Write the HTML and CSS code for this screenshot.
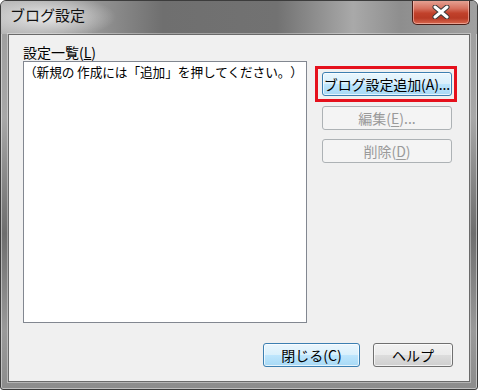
FILE: index.html
```html
<!DOCTYPE html>
<html lang="ja">
<head>
    <meta charset="UTF-8">
    <title>ブログ設定</title>
    <link rel="stylesheet" href="styles.css">
</head>
<body>
    <div class="window">
        <div class="titlebar">
            <span class="title">ブログ設定</span>
            <div class="close-x">
                <svg width="20" height="14" viewBox="0 0 20 14">
                    <path d="M4 2 L16 12 M16 2 L4 12" stroke="#3a3a3a" stroke-width="5" stroke-linecap="round"/>
                    <path d="M4 2 L16 12 M16 2 L4 12" stroke="#ffffff" stroke-width="3" stroke-linecap="round"/>
                </svg>
            </div>
        </div>

        <div class="client">
            <div class="main">
                <div class="list-col">
                    <div class="label">設定一覧(<u>L</u>)</div>
                    <div class="listbox">（新規の 作成には「追加」を押してください。）</div>
                </div>
                <div class="side">
                    <div class="highlight">
                        <button class="btn btn-default btn-add">ブログ設定追加(A)...</button>
                    </div>
                    <button class="btn btn-side btn-edit" disabled>編集(<u>E</u>)...</button>
                    <button class="btn btn-side btn-del" disabled>削除(<u>D</u>)</button>
                </div>
            </div>
            <div class="footer">
                <button class="btn btn-default btn-close">閉じる(C)</button>
                <button class="btn btn-help">ヘルプ</button>
            </div>
        </div>
    </div>
</body>
</html>
```

FILE: styles.css
```css
* {
    box-sizing: border-box;
    margin: 0;
    padding: 0;
}

body {
    width: 478px;
    height: 390px;
    overflow: hidden;
    font-family: "Noto Sans CJK JP", "Noto Sans", sans-serif;
    font-size: 14px;
    color: #000;
    background: #fff;
    text-spacing-trim: space-all;
}

.window {
    width: 478px;
    height: 390px;
    border: 1px solid #3c3c3c;
    border-radius: 6px 6px 3px 3px;
    background: linear-gradient(180deg, #9c9c9c 0%, #a8a8a8 30%, #808080 50%, #6e6e6e 60%, #9a9a9a 85%, #8c8c8c 100%);
    box-shadow: inset 0 0 0 1px rgba(255, 255, 255, 0.45);
    display: flex;
    flex-direction: column;
    overflow: hidden;
}

.titlebar {
    height: 33px;
    display: flex;
    align-items: flex-start;
    background:
        radial-gradient(ellipse 70px 22px at 45px 16px, rgba(235, 235, 235, 0.95), rgba(235, 235, 235, 0) 100%),
        linear-gradient(90deg, #b5b5b5 0%, #9a9a9a 18%, #6f6f6f 34%, #727272 58%, #a9a9a9 74%, #8e8e8e 84%, #a0a0a0 100%);
}

.title {
    padding: 5px 0 0 9px;
    font-size: 15px;
    line-height: 18px;
    color: #111;
}

.close-x {
    margin-left: auto;
    margin-right: 7px;
    margin-top: -1px;
    width: 58px;
    height: 25px;
    border: 1px solid #4a1d17;
    border-top: none;
    border-radius: 0 0 5px 5px;
    background: linear-gradient(180deg, #e6a799 0%, #d6715f 35%, #c1412b 55%, #b83a25 75%, #d9684f 100%);
    box-shadow: inset 0 0 0 1px rgba(255, 210, 200, 0.55);
    display: flex;
    align-items: center;
    justify-content: center;
}

.client {
    flex: 1;
    margin: 0 7px 7px 7px;
    border: 1px solid #6a6a6a;
    background: #f0f0f0;
    box-shadow: 0 0 0 1px rgba(255, 255, 255, 0.35);
    display: flex;
    flex-direction: column;
}

.main {
    display: flex;
    padding: 10px 0 0 14px;
}

.label {
    height: 16px;
    line-height: 15px;
    font-size: 14px;
}

.listbox {
    width: 284px;
    height: 262px;
    border: 1px solid #828790;
    background: #fff;
    padding: 2px 0 0 0;
    font-size: 12.7px;
    line-height: 16px;
    white-space: nowrap;
    letter-spacing: -0.1px;
}

.side {
    margin: 21px 0 0 8px;
    display: flex;
    flex-direction: column;
}

.highlight {
    width: 142px;
    height: 36px;
    border: 3px solid #e5101c;
    padding: 3px 2px 3px 4px;
}

.btn {
    height: 24px;
    font-family: inherit;
    font-size: 14px;
    line-height: 20px;
    color: #000;
    border: 1px solid #707070;
    border-radius: 3px;
    background: linear-gradient(180deg, #f2f2f2 0%, #ebebeb 50%, #dddddd 50%, #cfcfcf 100%);
    box-shadow: inset 0 0 0 1px rgba(255, 255, 255, 0.7);
    white-space: nowrap;
}

.btn u {
    text-underline-offset: 2px;
}

.btn-default {
    border-color: #3c7fb1;
    background: linear-gradient(180deg, #eaf6fd 0%, #d9f0fc 50%, #bee6fd 50%, #a7d9f5 100%);
}

.btn-add {
    width: 130px;
    padding: 0;
    letter-spacing: -0.1px;
}

.btn-side {
    width: 130px;
    margin-left: 7px;
}

.btn:disabled {
    border-color: #adb2b5;
    background: #f4f4f4;
    color: #9a9a9a;
    box-shadow: none;
}

.btn-edit {
    margin-top: 4px;
}

.btn-del {
    margin-top: 9px;
}

.footer {
    display: flex;
    justify-content: flex-end;
    gap: 13px;
    margin-top: 20px;
    padding-right: 16px;
}

.btn-close {
    width: 97px;
}

.btn-help {
    width: 80px;
}
```
